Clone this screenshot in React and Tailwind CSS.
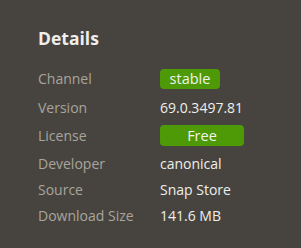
export default function App() {
  const rows = [
    { label: "Channel", value: "stable", badge: "w-[60px] h-[20px]", h: "h-[29px]" },
    { label: "Version", value: "69.0.3497.81", h: "h-[28px]" },
    { label: "License", value: "Free", badge: "w-[84px] h-[21px]", h: "h-[29px]" },
    { label: "Developer", value: "canonical", h: "h-[26px]" },
    { label: "Source", value: "Snap Store", h: "h-[26px]" },
    { label: "Download Size", value: "141.6 MB", h: "h-[26px]" },
  ];

  return (
    <div className="h-[248px] w-[301px] bg-[#47443f] pl-[38px] pt-[28px] font-['Open_Sans',sans-serif]">
      <h2 className="text-[17.5px] leading-[20px] font-bold text-[#eeeeec]">Details</h2>

      <div className="mt-[16px]">
        {rows.map((row) => (
          <div key={row.label} className={`flex items-center ${row.h}`}>
            <span className="w-[122px] shrink-0 text-[14px] text-[#a8a49d]">{row.label}</span>
            {row.badge ? (
              <span
                className={`${row.badge} flex items-center justify-center rounded-[4px] bg-[#4e9a06] text-[14.5px] text-[#f3f3ee]`}
              >
                {row.value}
              </span>
            ) : (
              <span className="text-[14px] text-[#eeeeec]">{row.value}</span>
            )}
          </div>
        ))}
      </div>
    </div>
  );
}
